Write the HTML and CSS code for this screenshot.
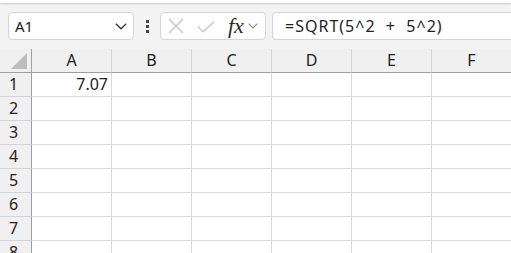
FILE: index.html
```html
<!DOCTYPE html>
<html>
<head>
<meta charset="utf-8">
<link rel="stylesheet" href="styles.css">
</head>
<body>
<div class="ribbon-edge"></div>
<div class="formula-bar">
  <div class="namebox">
    <span class="namebox-text">A1</span>
    <svg class="chev" width="12" height="7" viewBox="0 0 12 7"><path d="M0.8 0.8 L6 5.8 L11.2 0.8" fill="none" stroke="#333" stroke-width="1.2"/></svg>
  </div>
  <div class="vdots"><i></i><i></i><i></i></div>
  <div class="fxgroup">
    <svg class="ico-x" width="16" height="16" viewBox="0 0 16 16"><path d="M1 1 L15 15 M15 1 L1 15" stroke="#c3c3c3" stroke-width="1.2" fill="none"/></svg>
    <svg class="ico-check" width="18" height="12" viewBox="0 0 18 12"><path d="M0.8 5.5 L6 10.8 L17.2 0.8" stroke="#c3c3c3" stroke-width="1.2" fill="none"/></svg>
    <span class="fx">fx</span>
    <svg class="chev-sm" width="10" height="6" viewBox="0 0 10 6"><path d="M0.7 0.7 L5 5 L9.3 0.7" fill="none" stroke="#888" stroke-width="1.1"/></svg>
  </div>
  <div class="formula-input"><span class="formula-text">=SQRT(5^2  +  5^2)</span></div>
</div>
<div class="sheet">
  <div class="corner"><span class="tri"></span></div>
  <div class="colh">A</div><div class="colh">B</div><div class="colh">C</div><div class="colh">D</div><div class="colh">E</div><div class="colh">F</div>

  <div class="rowh">1</div><div class="cell num">7.07</div><div class="cell"></div><div class="cell"></div><div class="cell"></div><div class="cell"></div><div class="cell"></div>
  <div class="rowh">2</div><div class="cell"></div><div class="cell"></div><div class="cell"></div><div class="cell"></div><div class="cell"></div><div class="cell"></div>
  <div class="rowh">3</div><div class="cell"></div><div class="cell"></div><div class="cell"></div><div class="cell"></div><div class="cell"></div><div class="cell"></div>
  <div class="rowh">4</div><div class="cell"></div><div class="cell"></div><div class="cell"></div><div class="cell"></div><div class="cell"></div><div class="cell"></div>
  <div class="rowh">5</div><div class="cell"></div><div class="cell"></div><div class="cell"></div><div class="cell"></div><div class="cell"></div><div class="cell"></div>
  <div class="rowh">6</div><div class="cell"></div><div class="cell"></div><div class="cell"></div><div class="cell"></div><div class="cell"></div><div class="cell"></div>
  <div class="rowh">7</div><div class="cell"></div><div class="cell"></div><div class="cell"></div><div class="cell"></div><div class="cell"></div><div class="cell"></div>
  <div class="rowh">8</div><div class="cell"></div><div class="cell"></div><div class="cell"></div><div class="cell"></div><div class="cell"></div><div class="cell"></div>
</div>
</body>
</html>
```
FILE: styles.css
```css
html, body {
  margin: 0;
  padding: 0;
}
body {
  width: 511px;
  height: 253px;
  overflow: hidden;
  background: #f3f3f3;
  font-family: "Segoe UI", "Noto Sans", "Open Sans", sans-serif;
  color: #222;
}
.ribbon-edge {
  height: 3px;
  background: #fff;
  box-shadow: 0 1px 2px rgba(0,0,0,0.18);
}
.formula-bar {
  display: flex;
  align-items: center;
  height: 28px;
  margin-top: 9px;
  padding-left: 8px;
}
.namebox {
  box-sizing: border-box;
  width: 126px;
  height: 28px;
  background: #fff;
  border: 1px solid #d5d5d5;
  border-radius: 4px;
  display: flex;
  align-items: center;
  padding-left: 6px;
  padding-right: 6px;
}
.namebox-text {
  flex: 1;
  font-size: 15px;
}
.chev { display: block; }
.vdots {
  width: 26px;
  display: flex;
  flex-direction: column;
  align-items: center;
  gap: 2px;
}
.vdots i {
  display: block;
  width: 3px;
  height: 3px;
  background: #444;
}
.fxgroup {
  box-sizing: border-box;
  width: 106px;
  height: 28px;
  background: #fff;
  border: 1px solid #d5d5d5;
  border-radius: 4px;
  display: flex;
  align-items: center;
  padding-left: 7px;
}
.ico-x { display: block; margin-right: 13px; }
.ico-check { display: block; margin-right: 13px; margin-top: 1px; }
.fx {
  font-family: "Liberation Serif", "DejaVu Serif", serif;
  font-style: italic;
  font-size: 22px;
  color: #2a2a2a;
  line-height: 1;
  margin-right: 4px;
}
.chev-sm { display: block; }
.formula-input {
  box-sizing: border-box;
  margin-left: 6px;
  flex: 1;
  height: 28px;
  background: #fff;
  border: 1px solid #d5d5d5;
  border-right: none;
  border-radius: 4px 0 0 4px;
  display: flex;
  align-items: center;
  padding-left: 12px;
}
.formula-text {
  font-size: 16px;
  letter-spacing: 1px;
  white-space: pre;
}
.sheet {
  margin-top: 9px;
  display: grid;
  grid-template-columns: 32px repeat(6, 80px);
  grid-auto-rows: 24px;
}
.sheet > div {
  box-sizing: border-box;
}
.corner {
  position: relative;
  background: #f0f0f0;
  border-right: 1px solid #9f9f9f;
  border-bottom: 1px solid #9f9f9f;
}
.tri {
  position: absolute;
  right: 4px;
  bottom: 3px;
  width: 0;
  height: 0;
  border-left: 16px solid transparent;
  border-bottom: 16px solid #bdbdbd;
}
.colh {
  background: #f0f0f0;
  border-right: 1px solid #d4d4d4;
  border-bottom: 1px solid #9f9f9f;
  text-align: center;
  font-size: 16px;
  line-height: 23px;
  color: #222;
}
.rowh {
  background: #f0f0f0;
  border-right: 1px solid #9f9f9f;
  border-bottom: 1px solid #d4d4d4;
  text-align: center;
  font-size: 16px;
  line-height: 23px;
  padding-right: 4px;
}
.cell {
  background: #fff;
  border-right: 1px solid #dadada;
  border-bottom: 1px solid #dadada;
  font-size: 16px;
  line-height: 23px;
}
.num {
  text-align: right;
  padding-right: 3px;
}
```
